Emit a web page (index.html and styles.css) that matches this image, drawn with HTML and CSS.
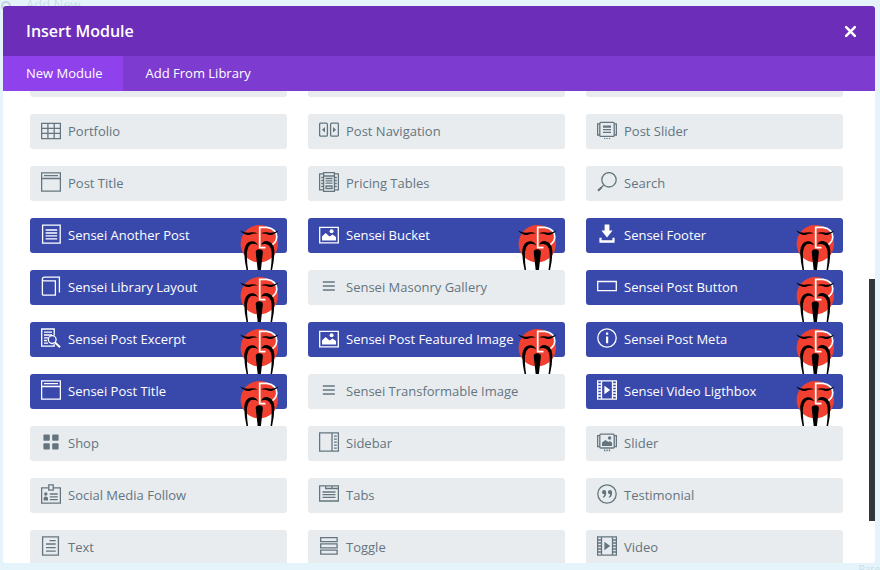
FILE: index.html
```
<!DOCTYPE html>
<html lang="en">
<head>
    <meta charset="utf-8">
    <title>Insert Module</title>
    <link rel="stylesheet" href="styles.css">
</head>
<body>

    <!-- icon sprite -->
    <svg class="sprite" aria-hidden="true">
        <symbol id="i-grid" viewBox="0 0 20 20"><path d="M.6 3.3h18.8v15.4H.6zM.6 8.3h18.8M.6 13.4h18.8M6.9 3.3v15.4M13.2 3.3v15.4"/></symbol>
        <symbol id="i-nav" viewBox="0 0 20 20"><rect x=".6" y="3.2" width="7.8" height="13" rx="1.2"/><rect x="11.6" y="3.2" width="7.8" height="13" rx="1.2"/><path class="fill" d="M6 7v5.4L3 9.7zM14 7v5.4l3-2.7z"/></symbol>
        <symbol id="i-postslider" viewBox="0 0 20 20"><rect x="2.8" y="2.4" width="14.4" height="14" rx="1"/><path d="M2.8 3.8H.6V15h2.2M17.2 3.8h2.2V15h-2.2M6 9.6h8M6 12.4h8"/><path class="fill" d="M6 5.4h8v2.4H6zM7 18h1.3v1H7zM9.4 18h1.3v1H9.4zM11.8 18h1.3v1h-1.3z"/></symbol>
        <symbol id="i-title" viewBox="0 0 20 20"><path d="M.6.8h18.8v18.4H.6zM.6 6.5h18.8M3 3.6h14"/></symbol>
        <symbol id="i-pricing" viewBox="0 0 20 20"><path d="M4.6.6h10.8v18.8H4.6zM4.6 1.8h-4v16h4M15.4 1.8h4v16h-4M4.6 4h10.8M6.5 6.5h7M6.5 8.8h7M6.5 11.2h7M2.2 5.5h2.4M2.2 8.5h2.4M2.2 11.5h2.4M2.2 14.5h2.4M15.4 5.5h2.4M15.4 8.5h2.4M15.4 11.5h2.4M15.4 14.5h2.4"/><path d="M7 14h6v2.5H7z"/></symbol>
        <symbol id="i-search" viewBox="0 0 20 20"><circle cx="12" cy="7.8" r="7.2"/><path d="M6.8 13 1.3 18.6"/><path class="thick" d="M4.4 15.5 1 18.8"/></symbol>
        <symbol id="i-article" viewBox="0 0 20 20"><path d="M1.6 1.2h17.6v18H1.6zM4.6 6h11.6M4.6 9h11.6M4.6 11.9h11.6M4.6 14.8h11.6"/></symbol>
        <symbol id="i-layout" viewBox="0 0 20 20"><path d="M1.4 3v15.3q0 .9.9.9h12.1V4.8H3.2Q1.4 4.8 1.4 3T3.4 1.2h15v15.2"/></symbol>
        <symbol id="i-image" viewBox="0 0 20 20"><path d="M.7 3.3h18.6v15.6H.7z"/><path class="fill" d="M3 16.6v-4.2L6.6 9l4 3.4 3-1.8 3.4 2.4v3.6z"/><circle class="fill" cx="12.6" cy="7.2" r="2"/></symbol>
        <symbol id="i-lines" viewBox="0 0 20 20"><path d="M3.8 6h12M3.8 10h12M3.8 14h12"/></symbol>
        <symbol id="i-download" viewBox="0 0 20 20"><path class="fill" d="M7.6.6h4.8v6h3.2L10 13.4 4.4 6.6h3.2zM2.4 13.8h2.2v2.4h10.8v-2.4h2.2v5H2.4z"/></symbol>
        <symbol id="i-button" viewBox="0 0 20 20"><path d="M.7 5.5h18.6v9.2H.7z"/></symbol>
        <symbol id="i-excerpt" viewBox="0 0 20 20"><path d="M13.2 7.6V1H.7v17.2h12.5v-2M3 4.2h8M3 7h8M3 9.8h4M3 12.5h3M3 15.2h4"/><circle cx="11.2" cy="11.6" r="3.9"/><path class="thick" d="m14 14.6 5 4.6"/></symbol>
        <symbol id="i-info" viewBox="0 0 20 20"><circle cx="10" cy="10" r="9.2"/><path class="fill" d="M9 8.4h2.2v6.8H9zM9 4.6h2.2v2.2H9z"/></symbol>
        <symbol id="i-film" viewBox="0 0 20 20"><path d="M.6.8h18.8v18.4H.6zM4.5.8v18.4M15.5.8v18.4M.6 4h3.9M.6 7h3.9M.6 10h3.9M.6 13h3.9M.6 16h3.9M15.5 4h3.9M15.5 7h3.9M15.5 10h3.9M15.5 13h3.9M15.5 16h3.9"/><path class="fill" d="m7.4 5.8 5.8 4.2-5.8 4.2z"/></symbol>
        <symbol id="i-shop" viewBox="0 0 20 20"><g class="fill"><rect x="2.4" y="2.6" width="6.4" height="6.2" rx="1"/><rect x="11.2" y="2.6" width="6.4" height="6.2" rx="1"/><rect x="2.4" y="11.2" width="6.4" height="6.2" rx="1"/><rect x="11.2" y="11.2" width="6.4" height="6.2" rx="1"/></g></symbol>
        <symbol id="i-sidebar" viewBox="0 0 20 20"><path d="M.6.8h18.8v18.4H.6zM13 .8v18.4M15 4.2h2.8M15 7.2h2.8M15 10.2h2.8M15 13.2h2.8M15 16.2h2.8"/></symbol>
        <symbol id="i-slider" viewBox="0 0 20 20"><rect x="2.8" y="2.2" width="14.4" height="13.8" rx="1"/><path d="M2.8 3.6H.6v11h2.2M17.2 3.6h2.2v11h-2.2"/><path class="fill" d="M5 14v-3.4L8.4 8l3 2 1.6-1 2 1.8V14zM7 17.6h1.3v1.6H7zM9.4 17.6h1.3v1.6H9.4zM11.8 17.6h1.3v1.6h-1.3z"/><circle class="fill" cx="12.6" cy="6" r="1.7"/></symbol>
        <symbol id="i-social" viewBox="0 0 20 20"><path d="M7.8 3.9H.6v15.2h18.8V3.9h-7.2M7.8.9h4.4v5.2H7.8zM8.8 10h8M8.8 12.8h8M8.8 15.6h8"/><circle class="fill" cx="4.8" cy="10" r="1.7"/><path class="fill" d="M2.6 16.4v-2.2q0-1.8 2.2-1.8T7 14.2v2.2z"/></symbol>
        <symbol id="i-tabs" viewBox="0 0 20 20"><path d="M.6 1.9h18.8V17H.6zM6.7 1.9v2.6h12.7M13 1.9v2.6M3.5 8h13M3.5 10.7h13M3.5 13.4h13"/></symbol>
        <symbol id="i-quote" viewBox="0 0 20 20"><circle cx="10" cy="10" r="9.2"/><path class="fill" d="M5 8.2a2.1 2.1 0 1 1 4.2 0q.3 4-2.9 5.6l-.6-.7q1.7-1.3 1.6-2.9Q5 10.3 5 8.2zM10.9 8.2a2.1 2.1 0 1 1 4.2 0q.3 4-2.9 5.6l-.6-.7q1.7-1.3 1.6-2.9-2.3.1-2.3-2z"/></symbol>
        <symbol id="i-text" viewBox="0 0 20 20"><path d="M1.6.8h15.8v18.4H1.6zM8.5 4.6h6.2M5 8h9.7M5 11.6h9.7M5 15.2h9.7"/></symbol>
        <symbol id="i-toggle" viewBox="0 0 20 20"><path d="M1.7 1.6h16.4v4H1.7zM1.7 7.9h16.4v4H1.7zM1.7 14.2h16.4v4H1.7z"/></symbol>
        <!-- sensei face -->
        <symbol id="face" viewBox="0 0 39 46">
            <circle cx="19.3" cy="19.8" r="18.7" fill="#f1402f"/>
            <path d="M18.3 21.4Q16 16.8 11.5 17.2 4.500 18.500 4.200 27 4.400 38 6.800 47H8.200Q6.600 37 7 28 8 20 13 19.800 16 19.800 18.300 21.400zM21.300 20.400Q23 16.600 27.100 17 34.100 18.500 34.400 27 34.200 38 31.800 47H30.400Q32 37 31.600 28 30.600 20.500 25.600 20 22.600 19.800 21.300 20.400z"/>
            <path d="M15.7 28Q16 25.2 19.3 25.2 22.6 25.2 22.9 28L20.800 47H17.800z"/>
            <path d="M25.500 23.600H19.700V3.400H27Q36.500 5 36.800 13 36.300 18 32.500 20.500" fill="none" stroke="#fff" stroke-width="1.700"/>
            <path d="M0 6.600Q6 9.600 10 8.600 15 7.600 17.600 9.600 13 9.300 10 10.800 5 12 0 6.600zM38.600 6.600Q32.600 9.600 28.600 8.600 23.600 7.600 21 9.600 25.600 9.300 28.600 10.800 33.600 12 38.600 6.600z"/>
        </symbol>
    </svg>

    <!-- faded page behind the modal -->
    <div class="behind" aria-hidden="true">
        <span class="ring"></span>
        <span class="add-new">Add New</span>
        <span class="parent">Pare</span>
    </div>

    <div class="modal" role="dialog" aria-labelledby="modal-title">
        <header class="modal-header">
            <h1 id="modal-title">Insert Module</h1>
            <button class="close" aria-label="Close">
                <svg viewBox="0 0 12 12"><path d="m2 2 8 8M10 2l-8 8"/></svg>
            </button>
        </header>
        <nav class="tabs">
            <a href="#new" class="active">New Module</a>
            <a href="#library">Add From Library</a>
        </nav>

        <div class="modules-wrap">
            <ul class="modules">
                <li class="blank"></li>
                <li class="blank"></li>
                <li class="blank"></li>

                <li><button class="module"><svg class="icon"><use href="#i-grid"/></svg>Portfolio</button></li>
                <li><button class="module"><svg class="icon"><use href="#i-nav"/></svg>Post Navigation</button></li>
                <li><button class="module"><svg class="icon"><use href="#i-postslider"/></svg>Post Slider</button></li>

                <li><button class="module"><svg class="icon"><use href="#i-title"/></svg>Post Title</button></li>
                <li><button class="module"><svg class="icon"><use href="#i-pricing"/></svg>Pricing Tables</button></li>
                <li><button class="module"><svg class="icon"><use href="#i-search"/></svg>Search</button></li>

                <li><button class="module sensei"><svg class="icon"><use href="#i-article"/></svg>Sensei Another Post<svg class="face"><use href="#face"/></svg></button></li>
                <li><button class="module sensei"><svg class="icon"><use href="#i-image"/></svg>Sensei Bucket<svg class="face"><use href="#face"/></svg></button></li>
                <li><button class="module sensei"><svg class="icon"><use href="#i-download"/></svg>Sensei Footer<svg class="face"><use href="#face"/></svg></button></li>

                <li><button class="module sensei"><svg class="icon"><use href="#i-layout"/></svg>Sensei Library Layout<svg class="face"><use href="#face"/></svg></button></li>
                <li><button class="module"><svg class="icon"><use href="#i-lines"/></svg>Sensei Masonry Gallery</button></li>
                <li><button class="module sensei"><svg class="icon"><use href="#i-button"/></svg>Sensei Post Button<svg class="face"><use href="#face"/></svg></button></li>

                <li><button class="module sensei"><svg class="icon"><use href="#i-excerpt"/></svg>Sensei Post Excerpt<svg class="face"><use href="#face"/></svg></button></li>
                <li><button class="module sensei"><svg class="icon"><use href="#i-image"/></svg>Sensei Post Featured Image<svg class="face"><use href="#face"/></svg></button></li>
                <li><button class="module sensei"><svg class="icon"><use href="#i-info"/></svg>Sensei Post Meta<svg class="face"><use href="#face"/></svg></button></li>

                <li><button class="module sensei"><svg class="icon"><use href="#i-title"/></svg>Sensei Post Title<svg class="face"><use href="#face"/></svg></button></li>
                <li><button class="module"><svg class="icon"><use href="#i-lines"/></svg>Sensei Transformable Image</button></li>
                <li><button class="module sensei"><svg class="icon"><use href="#i-film"/></svg>Sensei Video Ligthbox<svg class="face"><use href="#face"/></svg></button></li>

                <li><button class="module"><svg class="icon"><use href="#i-shop"/></svg>Shop</button></li>
                <li><button class="module"><svg class="icon"><use href="#i-sidebar"/></svg>Sidebar</button></li>
                <li><button class="module"><svg class="icon"><use href="#i-slider"/></svg>Slider</button></li>

                <li><button class="module"><svg class="icon"><use href="#i-social"/></svg>Social Media Follow</button></li>
                <li><button class="module"><svg class="icon"><use href="#i-tabs"/></svg>Tabs</button></li>
                <li><button class="module"><svg class="icon"><use href="#i-quote"/></svg>Testimonial</button></li>

                <li><button class="module"><svg class="icon"><use href="#i-text"/></svg>Text</button></li>
                <li><button class="module"><svg class="icon"><use href="#i-toggle"/></svg>Toggle</button></li>
                <li><button class="module"><svg class="icon"><use href="#i-film"/></svg>Video</button></li>
            </ul>
            <div class="scrollbar"></div>
        </div>
    </div>

</body>
</html>
```
FILE: styles.css
```
* {
    box-sizing: border-box;
}
body {
    margin: 0;
    height: 100vh;
    padding: 6px 5px 7px 3px;
    overflow: hidden;
    position: relative;
    background: #e5f4fa;
    font-family: "Open Sans", "Noto Sans", sans-serif;
    font-size: 13px;
    font-weight: 500;
}
.sprite {
    position: absolute;
    width: 0;
    height: 0;
}

/* page behind */
.behind span {
    position: absolute;
    color: #c9dfe8;
    line-height: 16px;
}
.behind .ring {
    left: 1px;
    top: 1px;
    width: 10px;
    height: 10px;
    border: 2px solid #c3d3da;
    border-radius: 50%;
}
.behind .add-new {
    left: 26px;
    top: -4px;
}
.behind .parent {
    right: 0;
    bottom: -7px;
    font-size: 10px;
}

.modal {
    position: relative;
    display: flex;
    flex-direction: column;
    height: 100%;
    background: #fff;
    border-radius: 3px;
    overflow: hidden;
}
.modal-header {
    display: flex;
    align-items: center;
    justify-content: space-between;
    flex: none;
    height: 50px;
    padding: 0 18px 0 23px;
    background: #6c2eb9;
    color: #fff;
}
.modal-header h1 {
    margin: 0;
    font-size: 16px;
    font-weight: 600;
}
.close {
    display: flex;
    padding: 0;
    border: none;
    background: none;
    cursor: pointer;
}
.close svg {
    width: 13px;
    height: 13px;
    fill: none;
    stroke: #fff;
    stroke-width: 2.4;
    stroke-linecap: round;
}
.tabs {
    display: flex;
    flex: none;
    height: 35px;
    background: #7e3bd0;
}
.tabs a {
    padding: 0 20px 0 23px;
    line-height: 35px;
    color: #fff;
    text-decoration: none;
}
.tabs a.active {
    background: #8f42ec;
}

/* module list, scrolled part of the way down */
.modules-wrap {
    flex: 1;
    min-height: 0;
    position: relative;
    overflow: hidden;
}
.modules {
    display: grid;
    grid-template-columns: repeat(3, 1fr);
    grid-auto-rows: 35px;
    gap: 17px 21px;
    list-style: none;
    margin: -29px 0 0;
    padding: 0 32px 0 27px;
}
.blank {
    background: #e8ecef;
    border-radius: 3px;
}
.module {
    position: relative;
    display: flex;
    align-items: center;
    gap: 7px;
    width: 100%;
    height: 100%;
    padding: 0 11px 2px;
    border: none;
    border-radius: 3px;
    background: #e8ecef;
    color: #64757f;
    font: inherit;
    white-space: nowrap;
    cursor: pointer;
}
.module.sensei {
    background: #3949ab;
    color: #fff;
}
.icon {
    flex: none;
    width: 20px;
    height: 20px;
    margin-bottom: 1px;
    fill: none;
    stroke: currentColor;
    stroke-width: 1.3;
}
.fill {
    fill: currentColor;
    stroke: none;
}
.thick {
    stroke-width: 2;
}
.face {
    position: absolute;
    top: 6px;
    right: 8px;
    width: 39px;
    height: 46px;
}
.scrollbar {
    position: absolute;
    top: 188px;
    right: 0;
    width: 6px;
    height: 242px;
    background: #32373c;
}
```
